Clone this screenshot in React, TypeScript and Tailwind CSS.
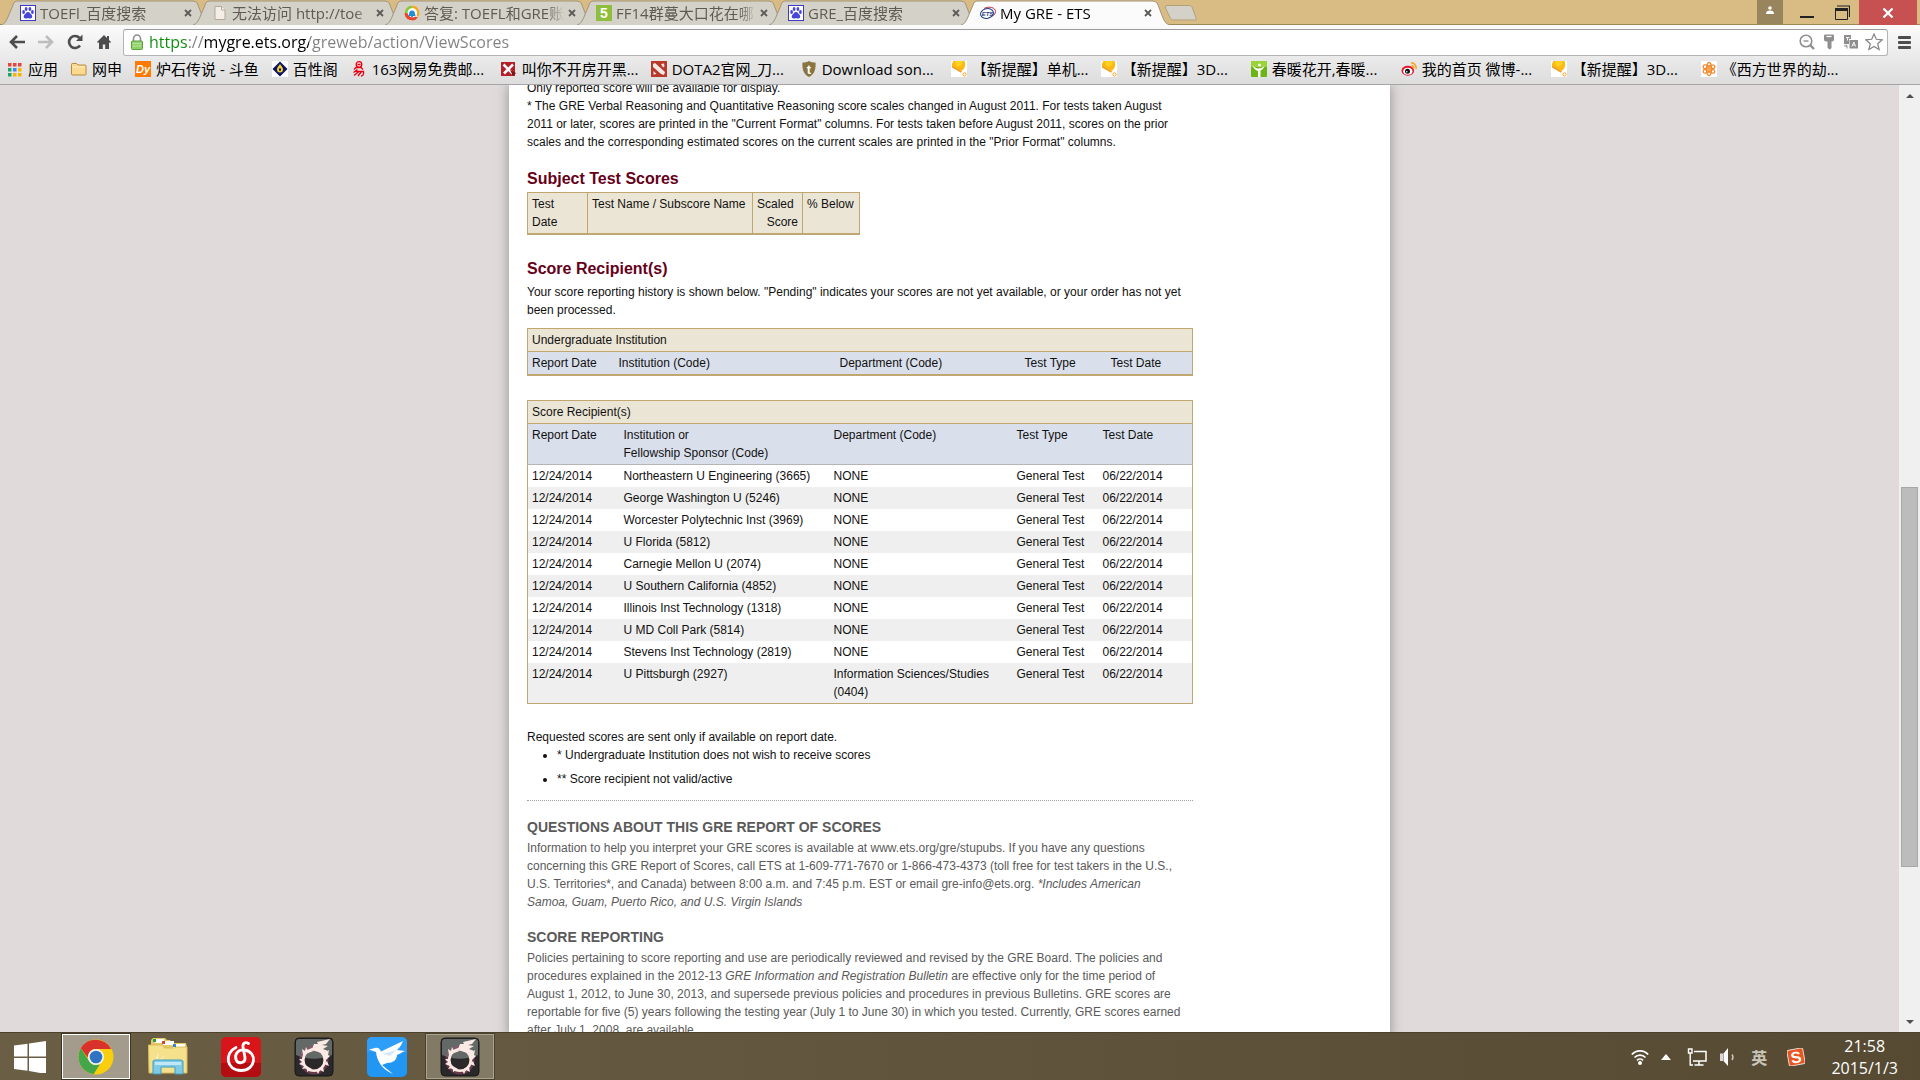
import type { ReactNode } from "react";

/* ---------- favicons ---------- */

const Svg = ({ children, size = "size-4" }: { children: ReactNode; size?: string }) => (
  <svg viewBox="0 0 16 16" className={`${size} shrink-0`} aria-hidden="true">
    {children}
  </svg>
);

const Paw = () => (
  <Svg>
    <rect x="0.5" y="0.5" width="15" height="15" fill="#fff" stroke="#3b3bc4" />
    <ellipse cx="3.6" cy="7" rx="1.4" ry="1.9" fill="#4646d8" />
    <ellipse cx="6.1" cy="4" rx="1.4" ry="1.9" fill="#4646d8" />
    <ellipse cx="9.9" cy="4" rx="1.4" ry="1.9" fill="#4646d8" />
    <ellipse cx="12.4" cy="7" rx="1.4" ry="1.9" fill="#4646d8" />
    <path d="M8 7c1.6 0 2.1 1.4 3.3 2.5 1.5 1.4 1.3 3.9-1 4-1 0-1.400-.3-2.300-.3s-1.300.3-2.300.3c-2.300-.1-2.500-2.600-1-4C5.900 8.400 6.400 7 8 7z" fill="#4646d8" />
  </Svg>
);

const BlankPage = () => (
  <Svg>
    <path d="M3 1.500h6.500l3.500 3.500v9.500H3z" fill="#f4efe6" stroke="#b5a793" />
    <path d="M9.500 1.500V5H13" fill="#fff" stroke="#b5a793" />
  </Svg>
);

const Swirl = () => (
  <Svg>
    <circle cx="8" cy="8" r="7.500" fill="#fff" />
    <path d="M.5 8A7.500 7.500 0 0 1 8 .5L9 3a5 5 0 0 0-5.500 5z" fill="#8cc63e" />
    <path d="M8 .5a7.500 7.500 0 0 1 6 12l-1.500-2A5 5 0 0 0 9 3z" fill="#f6a51a" />
    <path d="M.5 8A7.500 7.500 0 0 0 14 12.500l-2.500-1A5 5 0 0 1 3.500 8z" fill="#e8462c" />
    <path d="M5 9a3 3.500 0 0 1 6 0l.7 2H4.300z" fill="#1f8fd6" />
    <circle cx="8" cy="11.500" r="1" fill="#1f8fd6" />
  </Svg>
);

const Five = () => (
  <Svg>
    <rect width="16" height="16" fill="#8fbe3c" />
    <text x="8" y="13" textAnchor="middle" fontSize="14" fontWeight="700" fill="#fff" fontFamily="Liberation Sans, sans-serif">5</text>
  </Svg>
);

const Ets = () => (
  <Svg>
    <ellipse cx="7" cy="8.500" rx="6.500" ry="4.800" fill="#fff" stroke="#1d3f86" transform="rotate(-12 7 8.500)" />
    <path d="M4 3.500C9 .8 15.500 2.500 15.500 6.500c0 2-1.300 3.500-3 4.500" fill="none" stroke="#b3324a" />
    <text x="7.500" y="11" textAnchor="middle" fontSize="6" fontWeight="700" fontStyle="italic" fill="#1d3f86" fontFamily="Liberation Sans, sans-serif">ETS</text>
  </Svg>
);

const Apps = () => {
  const colors = ["#e8453c", "#e8453c", "#e8453c", "#1fa463", "#4285f4", "#f7b500", "#1fa463", "#f7b500", "#f7b500"];
  return (
    <Svg>
      {colors.map((c, i) => (
        <rect key={i} x={1 + (i % 3) * 5} y={2 + Math.floor(i / 3) * 5} width="3.500" height="3.500" fill={c} />
      ))}
    </Svg>
  );
};

const Folder = () => (
  <Svg>
    <path d="M.5 13V3.500c0-.6.4-1 1-1h4l1.500 1.500H14c.6 0 1 .4 1 1V13c0 .6-.4 1-1 1H1.500c-.6 0-1-.4-1-1z" fill="#fbd98f" stroke="#b98a3e" />
    <path d="M1.500 6h12.500" stroke="#fdeec8" />
  </Svg>
);

const Douyu = () => (
  <Svg>
    <rect width="16" height="16" fill="#ff7a00" />
    <text x="8" y="12" textAnchor="middle" fontSize="11" fontWeight="700" fontStyle="italic" fill="#fff" fontFamily="Liberation Sans, sans-serif">Dy</text>
  </Svg>
);

const Diamond = () => (
  <Svg>
    <rect width="16" height="16" fill="#fff" />
    <path d="M8 .5 15.500 8 8 15.500.5 8z" fill="#0c1560" />
    <path d="M8 3c1.300 2 3 3.500 3 5.500A3 3 0 0 1 5 8.500C5 6.500 6.700 5 8 3z" fill="#f5d030" />
    <ellipse cx="8" cy="8.500" rx="1" ry="1.600" fill="#0c1560" />
  </Svg>
);

const Netease = () => (
  <Svg>
    <g fill="none" stroke="#e60012" strokeWidth="1.300">
      <circle cx="8" cy="3.500" r="2.800" />
      <path d="M6.500 3.500h3M3 8.500l2-2h5l2 2M6.500 8.500 2.500 11.500M4.500 10.500h8c.5 2.500-.5 4.500-2.500 4.500M8 10.500 3 14.500M10.500 10.500 7 15" />
    </g>
  </Svg>
);

const RedX = () => (
  <Svg>
    <rect y="1" width="14" height="14" fill="#b3202a" />
    <path d="m2.500 3.500 9 9M12 3.500l-9 9" stroke="#fff" strokeWidth="2.500" />
    <path d="m9 9 6 3-3 3z" fill="#7d1218" />
  </Svg>
);

const Dota = () => (
  <Svg>
    <rect width="16" height="16" fill="#b8382a" />
    <path d="m2 3 2-1 10 9-1 3-3-1L2 6z" fill="#f2e9e4" />
    <path d="m10 3 3-.5.500 3-1.500 1zM2.500 10l3 3-3 .5z" fill="#f2e9e4" />
  </Svg>
);

const Shield = () => (
  <Svg>
    <path d="M8 0c2 1.300 4 1.500 6.500 1.500C15 8 13.500 13.500 8 16 2.500 13.500 1 8 1.500 1.500 4 1.500 6 1.300 8 0z" fill="#8a7440" />
    <text x="8" y="12.500" textAnchor="middle" fontSize="13" fontWeight="700" fill="#fff" fontFamily="Liberation Sans, sans-serif">t</text>
  </Svg>
);

const Reminder = () => (
  <Svg>
    <rect width="16" height="16" fill="#fff" />
    <path d="M2.500 0h11c1.500 4 .5 7.500-3 10L1 5C.8 3 1.300 1.500 2.500 0z" fill="#fdb913" />
    <path d="M4.500 0h7c.5 3-1.500 5.500-4 5.500S4 3 4.500 0z" fill="#ffd21f" />
    <path d="m1 5.500 9.500 5.500" stroke="#f29a1c" strokeWidth="1.500" />
    <circle cx="13.500" cy="13.500" r="1.600" fill="none" stroke="#f9a01b" />
  </Svg>
);

const Spring = () => (
  <Svg>
    <rect width="16" height="16" rx="1" fill="#6db516" />
    <rect width="16" height="6" rx="1" fill="#9ad43b" />
    <circle cx="8.500" cy="4" r="1.500" fill="#fff" />
    <path d="M1.500 4.500c2 2 4 3 6 3s4.500-1 6-2.500c-1 3-3 4-4 4.500V16H7v-6C4.500 9 2.500 7.500 1.500 4.500z" fill="#fff" />
  </Svg>
);

const Weibo = () => (
  <Svg>
    <ellipse cx="6.800" cy="9.800" rx="6.300" ry="5" fill="#e6162d" />
    <ellipse cx="6.800" cy="10.200" rx="4.600" ry="3.500" fill="#fff" />
    <circle cx="6.500" cy="10.300" r="2.500" fill="#111" />
    <circle cx="5.800" cy="10.800" r=".8" fill="#fff" />
    <path d="M10 1.800a5 5 0 0 1 5 6M10.500 4.500a2.300 2.300 0 0 1 2 3" fill="none" stroke="#f9a11b" strokeWidth="1.500" />
  </Svg>
);

const Flower = () => (
  <Svg>
    <rect width="16" height="16" fill="#fff" />
    <g fill="none" stroke="#f28a2e" strokeWidth="1.300">
      <ellipse cx="8" cy="8" rx="2.500" ry="6.500" />
      <ellipse cx="8" cy="8" rx="2.500" ry="6.500" transform="rotate(60 8 8)" />
      <ellipse cx="8" cy="8" rx="2.500" ry="6.500" transform="rotate(120 8 8)" />
    </g>
    <circle cx="8" cy="8" r="2" fill="#f6a04a" />
  </Svg>
);

/* ---------- tab strip ---------- */

const tabs = [
  { title: "TOEFl_百度搜索", icon: <Paw /> },
  { title: "无法访问 http://toe", icon: <BlankPage /> },
  { title: "答复: TOEFL和GRE账", icon: <Swirl /> },
  { title: "FF14群蔓大口花在哪", icon: <Five /> },
  { title: "GRE_百度搜索", icon: <Paw /> },
  { title: "My GRE - ETS", icon: <Ets />, active: true },
];

const Tab = ({ title, icon, active }: { title: string; icon: ReactNode; active?: boolean }) => (
  <li className={`relative h-[25px] w-48 shrink-0 ${active ? "z-10" : ""}`}>
    <svg viewBox="0 0 212 25" className="absolute top-0 left-0 h-[25px] w-[212px]" aria-hidden="true">
      <path
        d="M1 25C5 24 6 21 8 17L13 5C14 2 15 1 18 1H192C195 1 197 2 198 5L203 18C205 22 206 24 210 25"
        fill={active ? "#fbfbfb" : "#d4d1c9"}
        stroke="#a3947a"
      />
    </svg>
    <div className="relative flex h-6 items-center pt-px pl-5">
      {icon}
      <span
        className={`ml-1 w-[140px] shrink-0 overflow-hidden text-[15px] leading-5 whitespace-nowrap [mask-image:linear-gradient(to_right,black_88%,transparent)] ${active ? "text-black" : "text-[#5f5b52]"}`}
      >
        {title}
      </span>
      <button type="button" aria-label={`关闭 ${title}`} className="flex size-4 shrink-0 items-center justify-center">
        <svg viewBox="0 0 8 8" className="size-2" aria-hidden="true">
          <path d="m1 1 6 6M7 1 1 7" stroke="#5c5a55" strokeWidth="1.800" />
        </svg>
      </button>
    </div>
  </li>
);

const TabStrip = () => (
  <div className="flex h-[25px] shrink-0 items-start justify-between bg-[#d9bc84] shadow-[inset_0_-1px_0_#a08556]">
    <div className="flex items-start">
      <ul className="flex">
        {tabs.map((t, i) => (
          <Tab key={i} {...t} />
        ))}
      </ul>
      <button type="button" aria-label="新标签页" className="mt-[5px] ml-3">
        <svg viewBox="0 0 34 16" className="h-4 w-[34px]" aria-hidden="true">
          <path d="M3 .5h22c2 0 3 1 3.500 2.500l3.500 10c.5 1.500 0 2-1.500 2H10c-2 0-3-.5-4-2.500L1.500 3C1 1.500 1.500.5 3 .5z" fill="#d4d1c9" stroke="#b3a07b" />
        </svg>
      </button>
    </div>
    <div className="flex items-start pr-[3px]">
      <button type="button" aria-label="用户" className="flex h-6 w-[26px] items-start justify-center bg-[#98845d] pt-1.5">
        <svg viewBox="0 0 8 8" className="size-2" aria-hidden="true">
          <circle cx="4" cy="2" r="1.800" fill="#fff" />
          <path d="M0 8c0-2.500 1.500-3.500 4-3.500S8 5.500 8 8z" fill="#fff" />
        </svg>
      </button>
      <button type="button" aria-label="最小化" className="flex h-6 w-12 items-end justify-center pb-1.5">
        <span className="h-0.5 w-3.5 bg-[#222]" />
      </button>
      <button type="button" aria-label="还原" className="flex h-6 w-7 items-center pl-1">
        <svg viewBox="0 0 15 15" className="size-[15px]" aria-hidden="true">
          <path d="M2 1h12.500v11" fill="none" stroke="#222" strokeWidth="1.200" />
          <path d="M.5 4.500h12v10H.5z" fill="none" stroke="#222" />
          <path d="M0 3h13v3H0z" fill="#222" />
        </svg>
      </button>
      <button type="button" aria-label="关闭" className="flex h-[25px] w-[58px] items-center justify-center bg-[#c75050]">
        <svg viewBox="0 0 12 10" className="h-2.5 w-3" aria-hidden="true">
          <path d="m1.500.5 9 9M10.500.5l-9 9" stroke="#fff" strokeWidth="2.200" />
        </svg>
      </button>
    </div>
  </div>
);

/* ---------- toolbar ---------- */

const Toolbar = () => (
  <div className="flex h-8 shrink-0 items-center pt-0.5">
    <nav aria-label="导航" className="flex w-[123px] items-center gap-[13px] pl-[9px]">
      <button type="button" aria-label="后退">
        <svg viewBox="0 0 16 16" className="size-4" aria-hidden="true">
          <path d="M8 2 2 8l6 6M2 8h14" fill="none" stroke="#4d4d4d" strokeWidth="2.600" />
        </svg>
      </button>
      <button type="button" aria-label="前进">
        <svg viewBox="0 0 16 16" className="size-4" aria-hidden="true">
          <path d="m8 2 6 6-6 6M14 8H0" fill="none" stroke="#bdbdbd" strokeWidth="2.600" />
        </svg>
      </button>
      <button type="button" aria-label="重新加载">
        <svg viewBox="0 0 16 16" className="size-4" aria-hidden="true">
          <path d="M13 11.500A6 6 0 1 1 12.500 4" fill="none" stroke="#4d4d4d" strokeWidth="2.600" />
          <path d="M15.500.5V7H9z" fill="#4d4d4d" />
        </svg>
      </button>
      <button type="button" aria-label="主页">
        <svg viewBox="0 0 16 16" className="size-4" aria-hidden="true">
          <path d="m8 1-7 7 1 1 1-.8V15h3.800v-4.500h2.400V15H13V8.200l1 .8 1-1-2-2V2h-2v2z" fill="#4d4d4d" />
        </svg>
      </button>
    </nav>
    <div className="flex h-[27px] min-w-0 flex-1 items-center rounded-[3px] border border-[#b4b4b4] border-t-[#9c9c9c] bg-white pr-1 pl-[7px]">
      <svg viewBox="0 0 12 16" className="h-4 w-3 shrink-0" aria-hidden="true">
        <path d="M2.500 8V4.500a3.500 3.500 0 0 1 7 0V8" fill="none" stroke="#8e8e8e" strokeWidth="1.600" />
        <rect x=".5" y="7" width="11" height="8.500" rx="1" fill="#8fd16b" stroke="#5f9c42" />
        <path d="M1.500 9.500h9M1.500 12h9" stroke="#b4e59a" />
      </svg>
      <input
        type="text"
        aria-label="地址"
        defaultValue="https://mygre.ets.org/greweb/action/ViewScores"
        className="ml-1.5 min-w-0 flex-1 bg-[linear-gradient(to_right,#0a8f08_0_39px,#808080_39px_55px,#000_55px_160px,#808080_160px)] bg-clip-text text-base leading-6 text-transparent outline-none"
      />
      <div className="flex items-center gap-1.5">
        <button type="button" aria-label="缩放">
          <svg viewBox="0 0 16 16" className="size-4" aria-hidden="true">
            <circle cx="7" cy="7" r="5.800" fill="none" stroke="#8f8f8f" strokeWidth="1.600" />
            <path d="M4.500 7h5" stroke="#8f8f8f" strokeWidth="1.400" />
            <path d="m11 11 4 4" stroke="#8f8f8f" strokeWidth="2.400" />
          </svg>
        </button>
        <button type="button" aria-label="密码">
          <svg viewBox="0 0 16 16" className="size-4" aria-hidden="true">
            <path d="M3 2c0-1 .5-1.500 1.500-1.500h7c1 0 1.500.5 1.500 1.500v3.500c0 1-1 2-2 2h-.5V14L9 15.500 6.500 14V7.500H5c-1 0-2-1-2-2z" fill="#8f8f8f" />
            <path d="M5.500 2.500h5" stroke="#fff" strokeWidth="1.300" />
          </svg>
        </button>
        <button type="button" aria-label="翻译">
          <svg viewBox="0 0 16 16" className="size-4" aria-hidden="true">
            <path d="M1 1h7v4H6v5H1zM6.500 6H15v8.500H6.500z" fill="#8f8f8f" />
            <path d="M3 3.500h3.500M4.500 3.500v3M9 12.500l1.800-4.500 1.800 4.500M9.600 11h2.400" fill="none" stroke="#fff" strokeWidth=".9" />
            <path d="M1 12h3l-1-1.500M4 12v2.500" fill="none" stroke="#8f8f8f" />
          </svg>
        </button>
        <button type="button" aria-label="收藏">
          <svg viewBox="0 0 18 18" className="size-[18px]" aria-hidden="true">
            <path d="m9 1 2.300 5.300 5.900.5-4.500 3.900 1.400 5.800L9 13.400l-5.100 3.100 1.400-5.800L.8 6.800l5.900-.5z" fill="#fff" stroke="#858585" strokeWidth="1.200" />
          </svg>
        </button>
      </div>
    </div>
    <button type="button" aria-label="菜单" className="flex w-8 flex-col items-center gap-0.5">
      <span className="h-[3px] w-[13px] rounded-[1px] bg-[#4d4d4d]" />
      <span className="h-[3px] w-[13px] rounded-[1px] bg-[#4d4d4d]" />
      <span className="h-[3px] w-[13px] rounded-[1px] bg-[#4d4d4d]" />
    </button>
  </div>
);

/* ---------- bookmarks ---------- */

const shortMarks = [
  { label: "应用", icon: <Apps /> },
  { label: "网申", icon: <Folder /> },
  { label: "炉石传说 - 斗鱼", icon: <Douyu /> },
  { label: "百性阁", icon: <Diamond /> },
];

const longMarks = [
  { label: "163网易免费邮...", icon: <Netease /> },
  { label: "叫你不开房开黑...", icon: <RedX /> },
  { label: "DOTA2官网_刀...", icon: <Dota /> },
  { label: "Download son...", icon: <Shield /> },
  { label: "【新提醒】单机...", icon: <Reminder /> },
  { label: "【新提醒】3D...", icon: <Reminder /> },
  { label: "春暖花开,春暖...", icon: <Spring /> },
  { label: "我的首页 微博-...", icon: <Weibo /> },
  { label: "【新提醒】3D...", icon: <Reminder /> },
  { label: "《西方世界的劫...", icon: <Flower /> },
];

const Bookmarks = () => (
  <div className="flex h-7 shrink-0 items-center overflow-hidden border-b border-[#a5a5a5] pb-[3px] pl-[7px] text-[15px] leading-5 whitespace-nowrap text-black">
    {shortMarks.map((b, i) => (
      <a key={i} href="#" className="flex shrink-0 items-center gap-[5px] pr-[13px]">
        {b.icon}
        {b.label}
      </a>
    ))}
    {longMarks.map((b, i) => (
      <a key={i} href="#" className="flex w-[150px] shrink-0 items-center gap-[5px]">
        {b.icon}
        {b.label}
      </a>
    ))}
  </div>
);

/* ---------- page ---------- */

const recipients = [
  ["Northeastern U Engineering (3665)", "NONE"],
  ["George Washington U (5246)", "NONE"],
  ["Worcester Polytechnic Inst (3969)", "NONE"],
  ["U Florida (5812)", "NONE"],
  ["Carnegie Mellon U (2074)", "NONE"],
  ["U Southern California (4852)", "NONE"],
  ["Illinois Inst Technology (1318)", "NONE"],
  ["U MD Coll Park (5814)", "NONE"],
  ["Stevens Inst Technology (2819)", "NONE"],
  ["U Pittsburgh (2927)", "Information Sciences/Studies (0404)"],
];

const Report = () => (
  <article className="-mt-1.5 max-w-[666px] text-xs leading-[18px] text-[#111]">
    <p>
      Only reported score will be available for display.
      <br />* The GRE Verbal Reasoning and Quantitative Reasoning score scales changed in August 2011. For tests taken August
      <br />
      2011 or later, scores are printed in the "Current Format" columns. For tests taken before August 2011, scores on the prior
      <br />
      scales and the corresponding estimated scores on the current scales are printed in the "Prior Format" columns.
    </p>

    <h2 className="mt-4 text-base leading-6 font-bold text-[#660019]">Subject Test Scores</h2>
    <table className="mt-px border-collapse border border-b-2 border-[#bfa76f] bg-[#ebe5d5] text-left align-top">
      <thead>
        <tr className="align-top">
          <th className="w-[60px] border border-[#bfa76f] px-1 py-0.5 font-normal">
            Test
            <br />
            Date
          </th>
          <th className="w-[165px] border border-[#bfa76f] px-1 py-0.5 font-normal whitespace-nowrap">Test Name / Subscore Name</th>
          <th className="w-[50px] border border-[#bfa76f] px-1 py-0.5 font-normal">
            <span className="block">Scaled</span>
            <span className="block text-right">Score</span>
          </th>
          <th className="w-[57px] border border-[#bfa76f] px-1 py-0.5 font-normal whitespace-nowrap">% Below</th>
        </tr>
      </thead>
    </table>

    <h2 className="mt-[22px] text-base leading-6 font-bold text-[#660019]">Score Recipient(s)</h2>
    <p className="mt-0.5">
      Your score reporting history is shown below. "Pending" indicates your scores are not yet available, or your order has not yet
      <br />
      been processed.
    </p>

    <table className="mt-[9px] w-full table-fixed border-collapse border border-[#bfa76f] text-left">
      <colgroup>
        <col className="w-[87px]" />
        <col className="w-[221px]" />
        <col className="w-[185px]" />
        <col className="w-[86px]" />
        <col />
      </colgroup>
      <thead>
        <tr className="border-b border-[#bfa76f] bg-[#ebe5d5]">
          <th colSpan={5} className="px-1 py-0.5 font-normal">Undergraduate Institution</th>
        </tr>
        <tr className="border-b-2 border-[#bfa76f] bg-[#d9dfeb]">
          <th className="px-1 py-0.5 font-normal">Report Date</th>
          <th className="px-1 py-0.5 font-normal">Institution (Code)</th>
          <th className="px-1 py-0.5 font-normal">Department (Code)</th>
          <th className="px-1 py-0.5 font-normal">Test Type</th>
          <th className="px-1 py-0.5 font-normal">Test Date</th>
        </tr>
      </thead>
    </table>

    <table className="mt-6 w-full table-fixed border-collapse border border-[#bfa76f] text-left">
      <colgroup>
        <col className="w-[92px]" />
        <col className="w-[210px]" />
        <col className="w-[183px]" />
        <col className="w-[86px]" />
        <col />
      </colgroup>
      <thead>
        <tr className="border-b border-[#bfa76f] bg-[#ebe5d5]">
          <th colSpan={5} className="px-1 py-0.5 font-normal">Score Recipient(s)</th>
        </tr>
        <tr className="border-b border-[#b5b5b5] bg-[#d9dfeb] align-top">
          <th className="px-1 py-0.5 font-normal">Report Date</th>
          <th className="px-1 py-0.5 font-normal">
            Institution or
            <br />
            Fellowship Sponsor (Code)
          </th>
          <th className="px-1 py-0.5 font-normal">Department (Code)</th>
          <th className="px-1 py-0.5 font-normal">Test Type</th>
          <th className="px-1 py-0.5 font-normal">Test Date</th>
        </tr>
      </thead>
      <tbody>
        {recipients.map(([school, dept]) => (
          <tr key={school} className="align-top even:bg-[#efefef]">
            <td className="px-1 py-0.5">12/24/2014</td>
            <td className="px-1 py-0.5">{school}</td>
            <td className="py-0.5 pr-5 pl-1">{dept}</td>
            <td className="px-1 py-0.5">General Test</td>
            <td className="px-1 py-0.5">06/22/2014</td>
          </tr>
        ))}
      </tbody>
    </table>

    <p className="mt-6">Requested scores are sent only if available on report date.</p>
    <ul className="list-disc space-y-1.5 pl-[30px]">
      <li>* Undergraduate Institution does not wish to receive scores</li>
      <li>** Score recipient not valid/active</li>
    </ul>
    <hr className="mt-3 border-t border-dotted border-[#a0a0a0]" />

    <div className="text-[#5a5a5a]">
      <h3 className="mt-4 text-sm leading-5 font-bold">QUESTIONS ABOUT THIS GRE REPORT OF SCORES</h3>
      <p className="mt-0.5">
        Information to help you interpret your GRE scores is available at www.ets.org/gre/stupubs. If you have any questions
        <br />
        concerning this GRE Report of Scores, call ETS at 1-609-771-7670 or 1-866-473-4373 (toll free for test takers in the U.S.,
        <br />
        U.S. Territories*, and Canada) between 8:00 a.m. and 7:45 p.m. EST or email gre-info@ets.org. <em>*Includes American
        <br />
        Samoa, Guam, Puerto Rico, and U.S. Virgin Islands</em>
      </p>
      <h3 className="mt-4 text-sm leading-5 font-bold">SCORE REPORTING</h3>
      <p className="mt-0.5">
        Policies pertaining to score reporting and use are periodically reviewed and revised by the GRE Board. The policies and
        <br />
        procedures explained in the 2012-13 <em>GRE Information and Registration Bulletin</em> are effective only for the time period of
        <br />
        August 1, 2012, to June 30, 2013, and supersede previous policies and procedures in previous Bulletins. GRE scores are
        <br />
        reportable for five (5) years following the testing year (July 1 to June 30) in which you tested. Currently, GRE scores earned
        <br />
        after July 1, 2008, are available.
      </p>
    </div>
  </article>
);

const Scrollbar = () => (
  <div className="flex w-[21px] shrink-0 flex-col items-center bg-[#f0f0f0] py-2">
    <svg viewBox="0 0 8 4" className="mt-px h-1 w-2" aria-hidden="true">
      <path d="M0 4 4 0l4 4z" fill="#505050" />
    </svg>
    <div className="grow-[390]" />
    <div className="w-[17px] grow-[379] border border-[#a8a8a8] bg-[#bcbcbc]" />
    <div className="grow-[153]" />
    <svg viewBox="0 0 8 4" className="h-1 w-2" aria-hidden="true">
      <path d="M0 0h8L4 4z" fill="#505050" />
    </svg>
  </div>
);

/* ---------- taskbar ---------- */

const WindowsLogo = () => (
  <svg viewBox="0 0 32 32" className="size-8" aria-hidden="true">
    <path d="m0 4.500 13.500-1.800V15.500H0zM15 2.500 32 0v15.500H15zM0 17h13.500v12.800L0 28zM15 17h17v16L15 30z" fill="#fff" />
  </svg>
);

const ChromeLogo = () => (
  <svg viewBox="0 0 36 36" className="size-9" aria-hidden="true">
    <circle cx="18" cy="18" r="17.500" fill="#f9ce0d" />
    <path d="M2.800 9.300A17.500 17.500 0 0 1 33.200 10H18a8 8 0 0 0-7.500 5.500l-1 3z" fill="#d9312b" />
    <path d="M2.800 9.300 11 22a8 8 0 0 0 7 4l4-.8-6.500 10.100A17.500 17.500 0 0 1 2.800 9.300z" fill="#44a648" />
    <circle cx="18" cy="18" r="8" fill="#f3f3f3" />
    <circle cx="18" cy="18" r="6.300" fill="#2f74c4" />
  </svg>
);

const ExplorerLogo = () => (
  <svg viewBox="0 0 40 40" className="size-10" aria-hidden="true">
    <path d="M3 7V3l2-2h12l2 2h3l2 3h14l1 4-2 25H2z" fill="#e5c765" />
    <path d="M7 2h9v4H7zM15 4h11v4H15zM25 7h12v4H25z" fill="#fff" />
    <path d="M5 2h3v3H5z" fill="#2d9b48" />
    <path d="M14 4h3v3h-3z" fill="#d8412f" />
    <path d="M25 7h3v3h-3z" fill="#2f86d3" />
    <path d="M.5 8h14l2 3h10l2-1h10.500v26H1z" fill="#f5e08b" stroke="#d9bd5c" />
    <path d="m6 25 5-10-2 9 9-6-8 8z" fill="#fffbe3" opacity=".7" />
    <path d="M5 37V24l2-1h26l2 1v13h-8v-7H13v7z" fill="#7fcbe6" stroke="#3e9dc4" />
    <path d="M7 25h26v3H7z" fill="#bfe7f5" />
  </svg>
);

const CloudMusicLogo = () => (
  <svg viewBox="0 0 40 40" className="size-10" aria-hidden="true">
    <rect width="40" height="40" rx="5" fill="#d8151a" />
    <path d="M0 26h40v9a5 5 0 0 1-5 5H5a5 5 0 0 1-5-5z" fill="#b30d12" />
    <path d="M15 10.500C3 16 5 33.500 20 33.500S37 15 23.500 13C16 12.500 13.500 18 15 22.500c1.800 5 9.500 4 9-2L22 10c-.5-4 2.500-5.500 5.500-3.500" fill="none" stroke="#fff" strokeWidth="2.800" strokeLinecap="round" />
  </svg>
);

const RingLogo = () => (
  <svg viewBox="0 0 40 40" className="size-10" aria-hidden="true">
    <rect x="1" y="1" width="38" height="38" rx="4" fill="#2b282a" stroke="#191818" />
    <path d="M2 5a3 3 0 0 1 3-3h30a3 3 0 0 1 3 3v13c-12 5-24 5-36 0z" fill="#626966" />
    <circle cx="20" cy="23" r="12" fill="none" stroke="#a34e70" strokeWidth="5" opacity=".5" />
    <circle cx="20" cy="23" r="10.800" fill="none" stroke="#fbeae4" strokeWidth="2.600" />
    <g fill="#fbeae4">
      <path d="m9 18-1-6 3 2 1-4 2 4 4-3-1 3 5-1z" />
      <path d="m18 12 2-5 4 0-1-2 13-3-4 5-4 1 6 1-5 3 5 2-3 3-10-3z" />
      <path d="m29 17 6-4-1 5 2 1-4 4z" />
      <path d="m10 22-5 0 3 3-3 2 5 2zM11 28l-3 4 5-1 0 4 5-3zM22 33l2 4 2-4 4 2-1-5zM30 27l5 2-2-5z" />
    </g>
  </svg>
);

const BirdLogo = () => (
  <svg viewBox="0 0 40 40" className="size-10" aria-hidden="true">
    <rect width="40" height="40" rx="5" fill="#2196f3" />
    <path d="M0 5a5 5 0 0 1 5-5h30a5 5 0 0 1 5 5v10H0z" fill="#2f9ef8" />
    <path d="M2 12.500 8 11c3-1 5 1 6 3.500L36 4c-2 5-4 7-6 9l8 1c-4 2-6 3-8 4 0 5-4 8-10 8l-5 2 11 9C16 33 10 25 9 15z" fill="#fff" />
    <path d="m15 17 15-4-7 6z" fill="#d4eafc" />
  </svg>
);

const pinned = [
  { name: "资源管理器", icon: <ExplorerLogo /> },
  { name: "云音乐", icon: <CloudMusicLogo /> },
  { name: "启动器", icon: <RingLogo /> },
  { name: "迅雷", icon: <BirdLogo /> },
];

const Taskbar = () => (
  <footer className="flex h-12 shrink-0 items-stretch justify-between border-t border-[#4b412c] bg-linear-to-r from-[#6a5e45] to-[#564a33] text-white">
    <div className="flex">
      <button type="button" aria-label="开始" className="flex w-[61px] items-center justify-center pr-0.5">
        <WindowsLogo />
      </button>
      <button type="button" aria-label="Chrome" className="flex w-[70px] items-center justify-center border border-[#3c3423] bg-[#a39b8b] shadow-[inset_0_0_0_1px_#fff]">
        <ChromeLogo />
      </button>
      {pinned.map((p) => (
        <button key={p.name} type="button" aria-label={p.name} className="flex w-[73px] items-center justify-center">
          {p.icon}
        </button>
      ))}
      <button type="button" aria-label="游戏" className="ml-0.5 flex w-[70px] items-center justify-center border border-[#4b412c] bg-[#837a66] shadow-[inset_0_0_0_1px_#aaa392]">
        <RingLogo />
      </button>
    </div>
    <div className="flex items-center pr-[22px]">
      <button type="button" aria-label="无线网络" className="mr-3">
        <svg viewBox="0 0 18 18" className="size-[18px]" aria-hidden="true">
          <path d="M.8 6.500a11 11 0 0 1 16.400 0M3.500 9.500a7.500 7.500 0 0 1 11 0M6 12.300a4.300 4.300 0 0 1 6 0" fill="none" stroke="#fff" strokeWidth="1.700" />
          <circle cx="9" cy="15" r="2" fill="#fff" />
        </svg>
      </button>
      <button type="button" aria-label="显示隐藏的图标" className="mr-4">
        <svg viewBox="0 0 10 6" className="h-1.5 w-2.5" aria-hidden="true">
          <path d="M0 6 5 0l5 6z" fill="#fff" />
        </svg>
      </button>
      <button type="button" aria-label="网络" className="mr-3">
        <svg viewBox="0 0 20 18" className="h-[18px] w-5" aria-hidden="true">
          <path d="M7 3.500h12v9.500H6M12 13v3.500M7.500 17h9" fill="none" stroke="#fff" strokeWidth="1.500" />
          <path d="M1.500 1h3.500v4H1.500zM3.200 5v12H6" fill="none" stroke="#fff" strokeWidth="1.400" />
        </svg>
      </button>
      <button type="button" aria-label="音量" className="mr-3.5">
        <svg viewBox="0 0 18 18" className="size-[18px]" aria-hidden="true">
          <path d="M1 5.500h3V13H1z" fill="#d9d9d9" />
          <path d="M4.500 5.500 9 0v18l-4.500-5z" fill="#fff" />
          <path d="M13 6.500q2 2.500 0 5.500" fill="none" stroke="#cfc9bc" strokeWidth="1.400" />
        </svg>
      </button>
      <button type="button" className="mr-5 font-['Noto_Sans_CJK_SC',sans-serif] text-base leading-5 font-bold text-[#c9c4b8]">英</button>
      <button type="button" aria-label="搜狗输入法" className="mr-[26px]">
        <svg viewBox="0 0 18 18" className="size-[18px]" aria-hidden="true">
          <g transform="rotate(-10 9 9)">
            <rect x="1" y="1" width="16" height="16" rx="2" fill="#e9541f" stroke="#e8d9cc" />
            <text x="9" y="15" textAnchor="middle" fontSize="16" fontWeight="700" fill="#fff" fontFamily="Liberation Sans, sans-serif">S</text>
          </g>
        </svg>
      </button>
      <time className="text-center text-base leading-[22px]">
        <span className="block">21:58</span>
        <span className="block">2015/1/3</span>
      </time>
    </div>
  </footer>
);

export default function App() {
  return (
    <div className="flex h-screen flex-col overflow-hidden font-['Open_Sans','Noto_Sans_CJK_SC',sans-serif]">
      <TabStrip />
      <header className="shrink-0 bg-linear-to-b from-[#fbfbfb] to-[#dcdcdc]">
        <Toolbar />
        <Bookmarks />
      </header>
      <div className="flex min-h-0 flex-1">
        <main className="min-w-0 flex-1 overflow-hidden bg-[#e0dbda] font-['Liberation_Sans',sans-serif]">
          <div className="mx-auto min-h-full w-full max-w-[881px] overflow-hidden bg-white px-[18px] shadow-[0_0_12px_rgba(0,0,0,0.35)]">
            <Report />
          </div>
        </main>
        <Scrollbar />
      </div>
      <Taskbar />
    </div>
  );
}
